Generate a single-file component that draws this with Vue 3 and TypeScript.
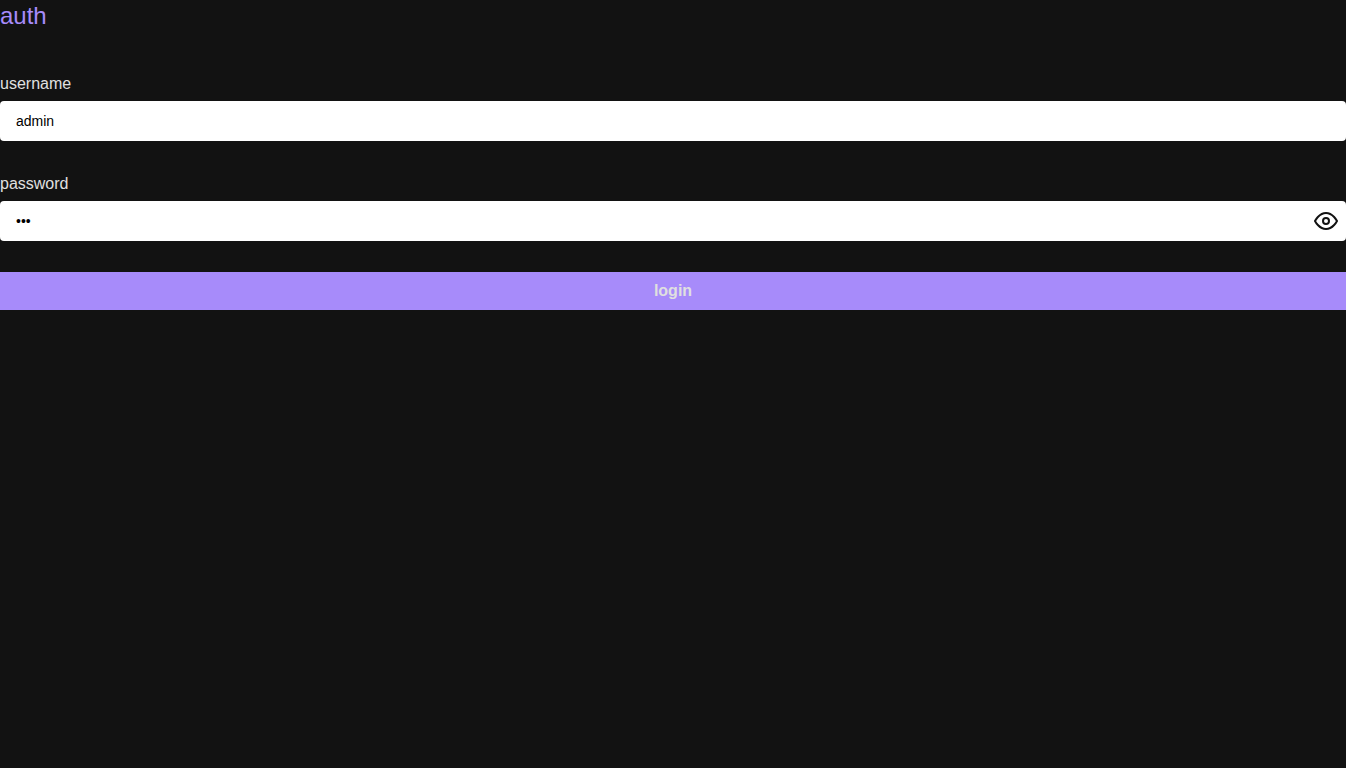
<script setup lang="ts">
import { ref } from 'vue'

const username = ref('admin')
const password = ref('123')
const showPassword = ref(false)
</script>

<template>
  <main class="auth">
    <h1 class="title">auth</h1>
    <form class="form" @submit.prevent>
      <div class="field">
        <label class="label" for="username">username</label>
        <input id="username" v-model="username" class="input" type="text" autocomplete="username" />
      </div>
      <div class="field">
        <label class="label" for="password">password</label>
        <div class="control">
          <input
            id="password"
            v-model="password"
            class="input input-password"
            :type="showPassword ? 'text' : 'password'"
            autocomplete="current-password"
          />
          <button
            class="toggle"
            type="button"
            aria-label="show password"
            :aria-pressed="showPassword"
            @click="showPassword = !showPassword"
          >
            <svg viewBox="0 0 24 24" width="24" height="24" fill="none" stroke="currentColor" stroke-width="2" stroke-linecap="round" stroke-linejoin="round" aria-hidden="true">
              <path d="M1 12s4-8 11-8 11 8 11 8-4 8-11 8-11-8-11-8z" />
              <circle cx="12" cy="12" r="3" />
            </svg>
          </button>
        </div>
      </div>
      <button class="submit" type="submit">login</button>
    </form>
  </main>
</template>

<style>
body {
  margin: 0;
  background: #121212;
}
</style>

<style scoped>
.auth {
  color: #e0e0e0;
  font-family: "Liberation Sans", Arial, sans-serif;
  font-size: 16px;
  line-height: 24px;
}

.title {
  margin: 0 0 40px;
  color: #a78bfa;
  font-size: 24px;
  font-weight: 400;
  line-height: 32px;
}

.form {
  display: flex;
  flex-direction: column;
}

.field {
  display: flex;
  flex-direction: column;
  gap: 5px;
  margin-bottom: 31px;
}

.label {
  align-self: flex-start;
}

.control {
  position: relative;
}

.input {
  display: block;
  box-sizing: border-box;
  width: 100%;
  height: 40px;
  padding: 0 16px;
  border: 0;
  border-radius: 4px;
  outline: none;
  background: #fff;
  color: #000;
  font-family: inherit;
  font-size: 14px;
}

.input-password {
  padding-right: 40px;
}

.toggle {
  position: absolute;
  top: 8px;
  right: 8px;
  display: flex;
  padding: 0;
  border: 0;
  background: transparent;
  color: #121212;
  cursor: pointer;
}

.submit {
  padding: 7px 16px;
  border: 0;
  background: #a78bfa;
  color: #e0e0e0;
  font: inherit;
  font-weight: 700;
  cursor: pointer;
}
</style>
